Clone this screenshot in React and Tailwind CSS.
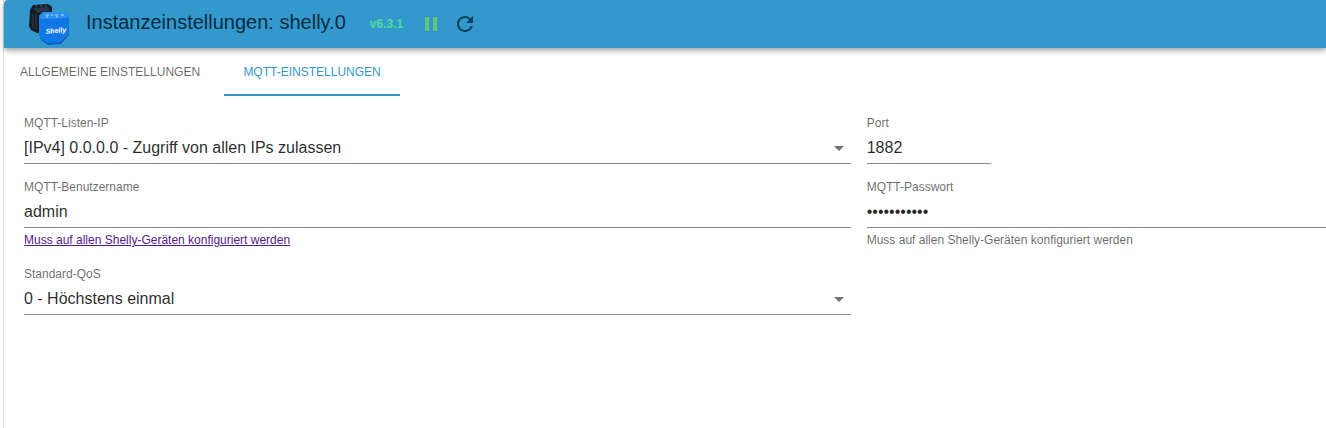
import { useState } from 'react'
import { MdPause, MdRefresh, MdArrowDropDown } from 'react-icons/md'

const TABS = [
    { id: 'general', label: 'Allgemeine Einstellungen' },
    { id: 'mqtt', label: 'MQTT-Einstellungen' },
]

const IP_OPTIONS = [
    '[IPv4] 0.0.0.0 - Zugriff von allen IPs zulassen',
    '[IPv4] 127.0.0.1 - Nur lokaler Zugriff',
]

const QOS_OPTIONS = [
    '0 - Höchstens einmal',
    '1 - Mindestens einmal',
    '2 - Genau einmal',
]

const inputClass =
    'block w-full h-8 border-b border-[#8c8c8c] bg-transparent text-base text-black/85 outline-none focus:border-[#3399cc]'

function ShellyLogo() {
    return (
        <svg viewBox="0 0 42 42" className="size-[42px]" aria-hidden="true">
            {/* relay in the back */}
            <path d="M5 2l15-1 4 3v12l-8 4v11l-7-1-6-3-2-4 1-16z" fill="#151c26" />
            <path d="M5 5l15-1 2 4-12 2z" fill="#27384a" />
            <path d="M5 11v14M8 11v15" stroke="#2f4052" strokeWidth="1" />
            <path d="M7 3h2M12 3h2M17 3h2" stroke="#4b5b6b" strokeWidth="1" />
            {/* blue relay in front */}
            <path d="M11 13l4-4 21 0 5 3v18l-9 9-12 1-7-4-2-5z" fill="#0f78e6" />
            <path d="M11 13l4-4 21 0 5 3-2 3-26 1z" fill="#2b93ee" />
            <path d="M11 31l2 5 7 4 12-1 9-9v2l-8 9-13 1-7-5z" fill="#0a5fc6" />
            <path d="M18 12h3M23 12h2M27 12h3M33 12h3M18 14h2M28 14h2" stroke="#b5dcff" strokeWidth="1" />
            <text
                x="28"
                y="30"
                textAnchor="middle"
                fontFamily="Liberation Sans, sans-serif"
                fontSize="7"
                fontWeight="bold"
                fontStyle="italic"
                fill="#fff"
                transform="rotate(-4 28 30)"
            >
                Shelly
            </text>
        </svg>
    )
}

function Field({ id, label, helper, className, children }) {
    return (
        <div className={className}>
            <label htmlFor={id} className="block pb-0.5 text-xs leading-[14px] text-black/60">
                {label}
            </label>
            {children}
            {helper && (
                <div className="mt-[3px] pb-0.5 text-xs leading-[18px] text-black/60">{helper}</div>
            )}
        </div>
    )
}

function SelectField({ id, label, options }) {
    return (
        <Field id={id} label={label}>
            <div className="relative">
                <select id={id} className={`${inputClass} appearance-none pr-6`}>
                    {options.map(o => (
                        <option key={o}>{o}</option>
                    ))}
                </select>
                <MdArrowDropDown
                    size={24}
                    className="pointer-events-none absolute right-0 top-1 text-black/55"
                />
            </div>
        </Field>
    )
}

export default function App() {
    const [tab, setTab] = useState('mqtt')

    return (
        <div className="min-h-screen bg-white pl-[3px] font-['Liberation_Sans',Arial,sans-serif]">
            <div className="min-h-screen border-l border-[#dcdcdc]">
                <header className="flex h-12 items-center rounded-tl bg-[#3399cc] pl-6 shadow-[0_2px_4px_-1px_rgba(0,0,0,0.2),0_4px_5px_rgba(0,0,0,0.14),0_1px_10px_rgba(0,0,0,0.12)]">
                    <ShellyLogo />
                    <h1 className="ml-4 pb-1 text-xl text-[#0b2a42]">Instanzeinstellungen: shelly.0</h1>
                    <span className="ml-6 text-xs font-bold text-[#4ddc9a]">v6.3.1</span>
                    <button type="button" aria-label="Pause" className="ml-4 text-[#62c47f]">
                        <MdPause size={24} />
                    </button>
                    <button type="button" aria-label="Neu laden" className="ml-2.5 text-[#0d3f60]">
                        <MdRefresh size={24} />
                    </button>
                </header>

                <div role="tablist" className="flex h-12 gap-2">
                    {TABS.map(t => (
                        <button
                            key={t.id}
                            type="button"
                            role="tab"
                            aria-selected={tab === t.id}
                            onClick={() => setTab(t.id)}
                            className={`min-w-44 border-b-2 px-4 pt-0.5 text-xs uppercase ${
                                tab === t.id
                                    ? 'border-[#3399cc] text-[#3399cc]'
                                    : 'border-transparent text-black/60'
                            }`}
                        >
                            {t.label}
                        </button>
                    ))}
                </div>

                <form className="grid grid-cols-[9fr_5fr] gap-4 pl-5 pt-5">
                    <SelectField id="bind" label="MQTT-Listen-IP" options={IP_OPTIONS} />
                    <Field id="port" label="Port" className="w-31">
                        <input id="port" type="text" inputMode="numeric" defaultValue="1882" className={inputClass} />
                    </Field>

                    <Field
                        id="user"
                        label="MQTT-Benutzername"
                        helper={
                            <a href="#devices" className="text-[#551a8b] underline">
                                Muss auf allen Shelly-Geräten konfiguriert werden
                            </a>
                        }
                    >
                        <input id="user" type="text" defaultValue="admin" className={inputClass} />
                    </Field>
                    <Field
                        id="password"
                        label="MQTT-Passwort"
                        helper="Muss auf allen Shelly-Geräten konfiguriert werden"
                    >
                        <input id="password" type="password" defaultValue="shellyadmin" className={inputClass} />
                    </Field>

                    <SelectField id="qos" label="Standard-QoS" options={QOS_OPTIONS} />
                </form>
            </div>
        </div>
    )
}
